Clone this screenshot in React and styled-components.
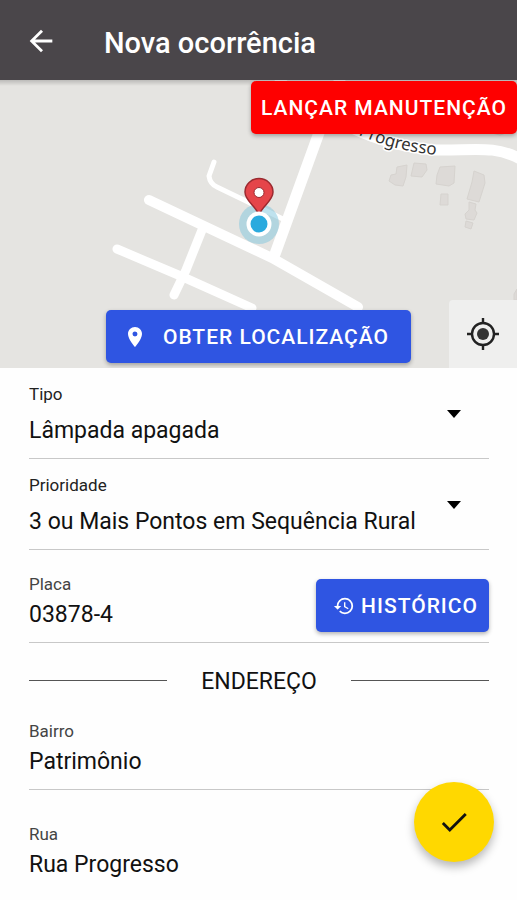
import React from "react";
import styled, { createGlobalStyle } from "styled-components";
import { MdArrowBack, MdCheck, MdHistory, MdLocationOn } from "react-icons/md";

const GlobalStyle = createGlobalStyle`
  * {
    box-sizing: border-box;
  }
  body {
    margin: 0;
    background-color: #fefefe;
    color: #111;
    font-family: Roboto, sans-serif;
  }
  button, input, select {
    font-family: inherit;
    color: inherit;
  }
`;

const Header = styled.header`
  height: 80px;
  display: flex;
  align-items: center;
  gap: 46px;
  padding: 6px 24px 0;
  background-color: #4a464a;
  color: white;
`;

const BackButton = styled.button`
  display: flex;
  padding: 0 0 4px;
  border: none;
  background: none;
  color: white;
`;

const Title = styled.h1`
  margin: 0;
  font-size: 29px;
  line-height: 32px;
  font-weight: 500;
`;

const MapArea = styled.section`
  position: relative;
  height: 288px;
  background-color: #e5e4e1;
  overflow: hidden;
`;

const MapDrawing = styled.svg`
  display: block;
  width: 100%;
  height: 100%;
`;

const Button = styled.button`
  height: 53px;
  display: flex;
  align-items: center;
  justify-content: center;
  gap: ${(props) => props.$gap || "0"};
  padding: ${(props) => props.$padding || "0 10px"};
  border: none;
  border-radius: 5px;
  background-color: ${(props) => (props.$danger ? "#fe0000" : "#2f55e2")};
  color: white;
  font-size: 21px;
  font-weight: 500;
  letter-spacing: 1px;
  text-transform: uppercase;
  white-space: nowrap;
  box-shadow: 0 2px 4px rgb(0 0 0 / 30%);
`;

const MapTop = styled.div`
  position: absolute;
  top: 1px;
  right: 0;
`;

const MapBottom = styled.div`
  position: absolute;
  left: 0;
  right: 0;
  bottom: 5px;
  display: flex;
  justify-content: center;
`;

const CenterButton = styled.button`
  position: absolute;
  right: 0;
  bottom: 0;
  width: 68px;
  height: 68px;
  display: flex;
  align-items: center;
  justify-content: center;
  padding: 0;
  border: none;
  border-radius: 4px 0 0 0;
  background-color: #efefee;
  color: #222;
`;

const Form = styled.form`
  padding: 0 28px 0 29px;
`;

const Row = styled.div`
  display: flex;
  align-items: ${(props) => props.$align || "flex-end"};
  padding: ${(props) => props.$padding || "24px 0 10px"};
  border-bottom: ${(props) => (props.$last ? "none" : "1px solid #c8c8c8")};
`;

const Field = styled.div`
  flex: 1;
  min-width: 0;
  display: flex;
  flex-direction: column;
  gap: ${(props) => props.$gap || "5px"};
  padding-bottom: 1px;
`;

const Label = styled.label`
  font-size: 17px;
  line-height: 20px;
  color: ${(props) => (props.$dark ? "#222" : "#444")};
`;

const Input = styled.input`
  width: 100%;
  height: 32px;
  padding: 0;
  border: none;
  outline: none;
  background: none;
  font-size: 23px;
  line-height: 32px;
`;

const Select = styled.select`
  width: 100%;
  height: 32px;
  padding: 0;
  border: none;
  outline: none;
  appearance: none;
  background: none;
  font-size: 23px;
  line-height: 32px;
`;

const Caret = styled.svg`
  flex: none;
  margin: 0 28px 4px 0;
  pointer-events: none;
`;

const Divider = styled.div`
  display: grid;
  grid-template-columns: 3fr 4fr 3fr;
  align-items: center;
  padding-top: 20px;
`;

const Line = styled.span`
  height: 1px;
  background-color: #555;
`;

const DividerText = styled.h2`
  margin: 0;
  padding-top: 4px;
  font-size: 23px;
  line-height: 30px;
  font-weight: 400;
  text-align: center;
`;

const Fab = styled.button`
  position: fixed;
  right: 23px;
  bottom: 38px;
  width: 80px;
  height: 80px;
  display: flex;
  align-items: center;
  justify-content: center;
  padding: 0;
  border: none;
  border-radius: 50%;
  background-color: #ffd800;
  color: #111;
  box-shadow: 0 5px 10px rgb(0 0 0 / 28%);
`;

function StreetMap() {
  return (
    <MapDrawing viewBox="0 0 517 288" preserveAspectRatio="xMidYMid slice">
      <defs>
        <linearGradient id="topShade" x1="0" y1="0" x2="0" y2="1">
          <stop offset="0" stopColor="#000" stopOpacity="0.18" />
          <stop offset="1" stopColor="#000" stopOpacity="0" />
        </linearGradient>
        <path id="streetName" d="M330 38C362 60 392 70 436 75" />
      </defs>

      <g fill="#dddad7" stroke="#d6d3cf" strokeWidth="1">
        <path d="M397 87l10-2-1 12-3 9-8-1-6-4 2-6 5-1z" />
        <path d="M414 83l12 1 1 6-5 7-11-1z" />
        <path d="M440 87l15-1-1 17-5 3-13-2 1-9z" />
        <path d="M441 114h7v11h-8z" />
        <path d="M474 91l10 4 1 8-6 19-12-3 5-17z" />
        <path d="M469 122l7 2-1 6 2 3-3 7-8-1-1-5 4-4z" />
        <path d="M466 141l7 2-2 6-6-2z" />
        <path d="M492 53l8 2 6-2z" />
        <path d="M517 209l-3 5v6h3z" />
      </g>

      <g
        fill="none"
        stroke="#fff"
        strokeLinecap="round"
        strokeLinejoin="round"
      >
        <path strokeWidth="10" d="M149 120L272 178L358 227" />
        <path strokeWidth="9" d="M117 169L183 197L252 228" />
        <path strokeWidth="9" d="M202 150L186 190L174 215" />
        <path strokeWidth="11" d="M342 -6L320 50L275 174" />
        <path strokeWidth="5" d="M214 82L209 96Q210 104 217 107L246 121L287 141" />
        <path
          strokeWidth="11"
          d="M280 2C325 38 375 66 436 70C470 71 495 64 522 80"
        />
      </g>

      <text
        fill="#333"
        stroke="#fff"
        strokeWidth="3"
        paintOrder="stroke"
        fontFamily="Noto Sans, sans-serif"
        fontSize="17"
        textAnchor="end"
      >
        <textPath href="#streetName" startOffset="100%">
          Progresso
        </textPath>
      </text>

      <circle cx="259" cy="144" r="20" fill="#7fc6de" fillOpacity="0.5" />
      <path
        d="M259 135c-3-9-14-14-14-23a14 13.5 0 0 1 28 0c0 9-11 14-14 23z"
        fill="#e5454a"
        stroke="#9b2a30"
        strokeWidth="1.5"
      />
      <circle cx="259" cy="112.5" r="5" fill="#fff" stroke="#9b2a30" />
      <circle cx="259" cy="144" r="12.5" fill="#fff" />
      <circle cx="259" cy="144" r="8.5" fill="#2aaade" />

      <rect width="517" height="6" fill="url(#topShade)" />
    </MapDrawing>
  );
}

function TargetIcon() {
  return (
    <svg width="32" height="32" viewBox="0 0 32 32">
      <circle cx="16" cy="16" r="6" fill="#333" />
      <circle
        cx="16"
        cy="16"
        r="11"
        fill="none"
        stroke="currentColor"
        strokeWidth="2.4"
      />
      <path
        d="M16 0v5M16 27v5M0 16h5M27 16h5"
        stroke="currentColor"
        strokeWidth="2.4"
      />
    </svg>
  );
}

function SelectRow({ id, label, options }) {
  return (
    <Row $padding="16px 0 10px" $align="center">
      <Field $gap="11px">
        <Label htmlFor={id} $dark>
          {label}
        </Label>
        <Select id={id}>
          {options.map((option) => (
            <option key={option}>{option}</option>
          ))}
        </Select>
      </Field>
      <Caret width="14" height="8" viewBox="0 0 14 8">
        <path d="M0 0h14L7 8z" fill="#000" />
      </Caret>
    </Row>
  );
}

function TextRow({ id, label, value, children, ...rest }) {
  return (
    <Row {...rest}>
      <Field>
        <Label htmlFor={id}>{label}</Label>
        <Input id={id} type="text" defaultValue={value} />
      </Field>
      {children}
    </Row>
  );
}

export default function App() {
  return (
    <>
      <GlobalStyle />
      <Header>
        <BackButton type="button" aria-label="Voltar">
          <MdArrowBack size={34} />
        </BackButton>
        <Title>Nova ocorrência</Title>
      </Header>

      <MapArea>
        <StreetMap />
        <MapTop>
          <Button type="button" $danger>
            Lançar manutenção
          </Button>
        </MapTop>
        <MapBottom>
          <Button type="button" $gap="16px" $padding="0 22px 0 17px">
            <MdLocationOn size={24} />
            Obter localização
          </Button>
        </MapBottom>
        <CenterButton type="button" aria-label="Centralizar">
          <TargetIcon />
        </CenterButton>
      </MapArea>

      <Form>
        <SelectRow id="tipo" label="Tipo" options={["Lâmpada apagada"]} />
        <SelectRow
          id="prioridade"
          label="Prioridade"
          options={["3 ou Mais Pontos em Sequência Rural"]}
        />
        <TextRow id="placa" label="Placa" value="03878-4">
          <Button type="button" $gap="6px" $padding="0 11px 0 17px">
            <MdHistory size={22} />
            Histórico
          </Button>
        </TextRow>

        <Divider>
          <Line />
          <DividerText>ENDEREÇO</DividerText>
          <Line />
        </Divider>

        <TextRow id="bairro" label="Bairro" value="Patrimônio" />
        <TextRow
          id="rua"
          label="Rua"
          value="Rua Progresso"
          $padding="34px 0 10px"
          $last
        />
      </Form>

      <Fab type="button" aria-label="Salvar">
        <MdCheck size={34} />
      </Fab>
    </>
  );
}
